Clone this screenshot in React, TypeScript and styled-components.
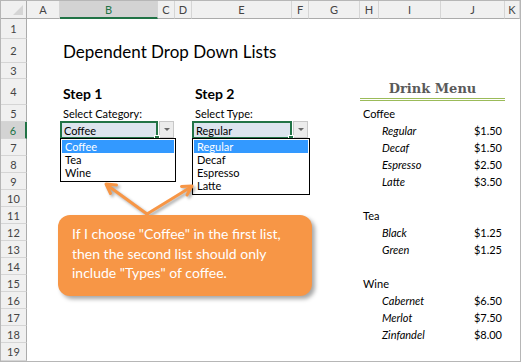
import React from 'react';
import styled, { createGlobalStyle } from 'styled-components';

const GlobalStyle = createGlobalStyle`
  html, body { margin: 0; padding: 0; background: #fff; }
  body { font-family: Lato, "Open Sans", sans-serif; }
`;

const COLUMNS = [
  { name: '', width: 26 },
  { name: 'A', width: 33 },
  { name: 'B', width: 98 },
  { name: 'C', width: 17 },
  { name: 'D', width: 17 },
  { name: 'E', width: 100 },
  { name: 'F', width: 17 },
  { name: 'G', width: 51 },
  { name: 'H', width: 19 },
  { name: 'I', width: 62 },
  { name: 'J', width: 64 },
  { name: 'K', width: 15 },
];

const ROW_HEIGHTS = [20, 24, 16, 26, 17, 17, 17, 17, 17, 17, 17, 17, 17, 17, 17, 17, 17, 17, 18];

// grid column index for a sheet column letter
const col = (letter: string) => COLUMNS.findIndex((c) => c.name === letter) + 1;
// grid row index for a sheet row number (row 1 of the grid is the header)
const row = (n: number) => n + 1;

const menu = [
  { r: 5, cat: 'Coffee' },
  { r: 6, item: 'Regular', price: '$1.50' },
  { r: 7, item: 'Decaf', price: '$1.50' },
  { r: 8, item: 'Espresso', price: '$2.50' },
  { r: 9, item: 'Latte', price: '$3.50' },
  { r: 11, cat: 'Tea' },
  { r: 12, item: 'Black', price: '$1.25' },
  { r: 13, item: 'Green', price: '$1.25' },
  { r: 15, cat: 'Wine' },
  { r: 16, item: 'Cabernet', price: '$6.50' },
  { r: 17, item: 'Merlot', price: '$7.50' },
  { r: 18, item: 'Zinfandel', price: '$8.00' },
];

const Frame = styled.div`
  position: relative;
  width: 521px;
  height: 362px;
  box-sizing: border-box;
  border: 1px solid #b6b6b6;
  overflow: hidden;
  background: #fff;
`;

const Sheet = styled.div`
  display: grid;
  grid-template-columns: ${COLUMNS.map((c) => c.width + 'px').join(' ')};
  grid-template-rows: 18px ${ROW_HEIGHTS.map((h) => h + 'px').join(' ')};
  color: #000;
`;

const Corner = styled.div`
  grid-column: 1;
  grid-row: 1;
  position: relative;
  background: #f0f0f0;
  box-sizing: border-box;
  border-right: 1px solid #ababab;
  border-bottom: 1px solid #ababab;

  &::after {
    content: '';
    position: absolute;
    right: 3px;
    bottom: 3px;
    border-left: 10px solid transparent;
    border-bottom: 10px solid #d5d5d5;
  }
`;

const ColHeader = styled.div<{ $selected?: boolean }>`
  grid-row: 1;
  display: flex;
  align-items: center;
  justify-content: center;
  box-sizing: border-box;
  font-size: 11px;
  background: ${(p) => (p.$selected ? '#d3d3d3' : '#f0f0f0')};
  color: ${(p) => (p.$selected ? '#217346' : '#444')};
  border-right: 1px solid #d5d5d5;
  border-bottom: ${(p) => (p.$selected ? '2px solid #217346' : '1px solid #ababab')};
`;

const RowHeader = styled.div<{ $selected?: boolean }>`
  grid-column: 1;
  display: flex;
  align-items: center;
  justify-content: center;
  box-sizing: border-box;
  font-size: 11px;
  background: ${(p) => (p.$selected ? '#d3d3d3' : '#f0f0f0')};
  color: ${(p) => (p.$selected ? '#217346' : '#444')};
  border-bottom: 1px solid #d5d5d5;
  border-right: ${(p) => (p.$selected ? '2px solid #217346' : '1px solid #ababab')};
`;

const Cell = styled.div<{ $col: number; $row: number; $span?: number; $right?: boolean }>`
  grid-column: ${(p) => p.$col} / span ${(p) => p.$span || 1};
  grid-row: ${(p) => p.$row};
  display: flex;
  align-items: center;
  justify-content: ${(p) => (p.$right ? 'flex-end' : 'flex-start')};
  padding: 0 3px;
  font-size: 11px;
  white-space: nowrap;
`;

const Title = styled(Cell)`
  font-size: 17px;
`;

const StepTitle = styled(Cell)`
  font-size: 14px;
  font-weight: 700;
  padding-top: 2px;
`;

const MenuHeading = styled(Cell)`
  justify-content: center;
  align-items: flex-end;
  padding: 0 0 4px;
`;

const MenuHeadingText = styled.div`
  flex: 1;
  text-align: center;
  font-family: "DejaVu Serif", "Liberation Serif", serif;
  font-weight: 700;
  font-size: 13px;
  color: #5a5a5a;
  line-height: 16px;
  border-bottom: 3px double #9bbb59;
  padding-bottom: 1px;
`;

const ItemCell = styled(Cell)`
  font-style: italic;
`;

const ActiveCell = styled(Cell)`
  position: relative;
  box-sizing: border-box;
  border: 2px solid #217346;
  background: #dce4ee;
  padding: 0 2px;
  margin-top: -1px;

  &::after {
    content: '';
    position: absolute;
    right: -4px;
    bottom: -4px;
    width: 4px;
    height: 4px;
    background: #217346;
    border: 1px solid #fff;
  }
`;

const DropButton = styled.div<{ $col: number; $row: number }>`
  grid-column: ${(p) => p.$col};
  grid-row: ${(p) => p.$row};
  margin: -1px 1px 1px 1px;
  box-sizing: border-box;
  background: #ececec;
  border: 1px solid #c8c8c8;
  display: flex;
  align-items: center;
  justify-content: center;

  &::before {
    content: '';
    border-left: 3px solid transparent;
    border-right: 3px solid transparent;
    border-top: 3px solid #6a6a6a;
  }
`;

const ListBox = styled.div<{ $left: number; $width: number }>`
  position: absolute;
  left: ${(p) => p.$left}px;
  top: 137px;
  width: ${(p) => p.$width}px;
  box-sizing: border-box;
  border: 1px solid #000;
  background: #fff;
  padding: 1px 1px 2px;
`;

const ListItem = styled.div<{ $active?: boolean }>`
  height: 13px;
  line-height: 13px;
  font-size: 11px;
  padding-left: 3px;
  background: ${(p) => (p.$active ? '#3399ff' : 'transparent')};
  color: ${(p) => (p.$active ? '#fff' : '#000')};
`;

const Callout = styled.div`
  position: absolute;
  left: 57px;
  top: 214px;
  width: 254px;
  height: 81px;
  box-sizing: border-box;
  padding: 9px 8px 0 14px;
  border-radius: 12px;
  background: #f79646;
  box-shadow: 3px 3px 4px rgba(0, 0, 0, 0.35);
  color: #fff;
  font-size: 14px;
  line-height: 19.5px;
  white-space: nowrap;
`;

const Arrows = styled.svg`
  position: absolute;
  left: -1px;
  top: -1px;
  pointer-events: none;
  filter: drop-shadow(2px 2px 1.5px rgba(0, 0, 0, 0.35));
`;

const App = () => {
  return (
    <>
      <GlobalStyle />
      <Frame>
        <Sheet>
          <Corner />
          {COLUMNS.slice(1).map((c, i) => (
            <ColHeader key={c.name} $selected={c.name === 'B'} style={{ gridColumn: i + 2 }}>
              {c.name}
            </ColHeader>
          ))}
          {ROW_HEIGHTS.map((_, i) => (
            <RowHeader key={i} $selected={i + 1 === 6} style={{ gridRow: i + 2 }}>
              {i + 1}
            </RowHeader>
          ))}

          <Title $col={col('B')} $row={row(2)} $span={5}>Dependent Drop Down Lists</Title>

          <StepTitle $col={col('B')} $row={row(4)}>Step 1</StepTitle>
          <Cell $col={col('B')} $row={row(5)}>Select Category:</Cell>
          <ActiveCell $col={col('B')} $row={row(6)}>Coffee</ActiveCell>
          <DropButton $col={col('C')} $row={row(6)} />

          <StepTitle $col={col('E')} $row={row(4)}>Step 2</StepTitle>
          <Cell $col={col('E')} $row={row(5)}>Select Type:</Cell>
          <ActiveCell $col={col('E')} $row={row(6)}>Regular</ActiveCell>
          <DropButton $col={col('F')} $row={row(6)} />

          <MenuHeading $col={col('H')} $row={row(4)} $span={3}>
            <MenuHeadingText>Drink Menu</MenuHeadingText>
          </MenuHeading>
          {menu.map((m) =>
            m.cat ? (
              <Cell key={m.r} $col={col('H')} $row={row(m.r)} $span={2}>{m.cat}</Cell>
            ) : (
              <React.Fragment key={m.r}>
                <ItemCell $col={col('I')} $row={row(m.r)}>{m.item}</ItemCell>
                <Cell $col={col('J')} $row={row(m.r)} $right>{m.price}</Cell>
              </React.Fragment>
            )
          )}
        </Sheet>

        <ListBox $left={59} $width={116}>
          <ListItem $active>Coffee</ListItem>
          <ListItem>Tea</ListItem>
          <ListItem>Wine</ListItem>
        </ListBox>
        <ListBox $left={191} $width={118}>
          <ListItem $active>Regular</ListItem>
          <ListItem>Decaf</ListItem>
          <ListItem>Espresso</ListItem>
          <ListItem>Latte</ListItem>
        </ListBox>

        <Arrows width="521" height="362" viewBox="0 0 521 362">
          <g stroke="#f79646" strokeWidth="3" fill="none" strokeLinecap="round" strokeLinejoin="round">
            <line x1="147" y1="214" x2="107" y2="185" />
            <polyline points="110.5,193.5 106,184 116.5,185" />
            <line x1="147" y1="214" x2="191" y2="187" />
            <polyline points="181.5,186.5 192,186 187,195" />
          </g>
        </Arrows>

        <Callout>
          If I choose "Coffee" in the first list,
          <br />
          then the second list should only
          <br />
          include "Types" of coffee.
        </Callout>
      </Frame>
    </>
  );
};

export default App;
